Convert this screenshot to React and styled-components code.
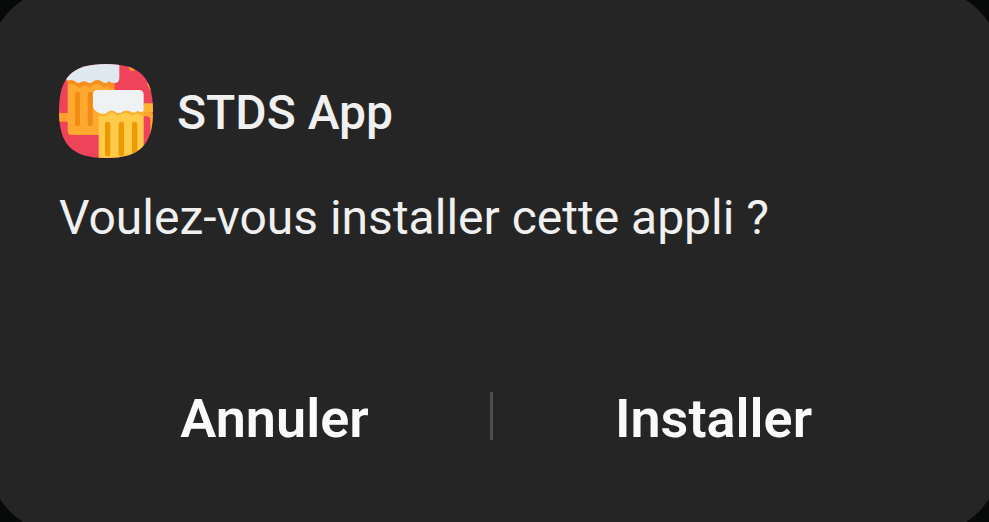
import React from 'react';
import styled, { createGlobalStyle } from 'styled-components';

const GlobalStyle = createGlobalStyle`
  * { box-sizing: border-box; }
  body { margin: 0; background: #070a09; }
`;

const Screen = styled.main`
  display: flex;
  min-height: 100vh;
  overflow: hidden;
  font-family: Roboto, 'Liberation Sans', sans-serif;
`;

const Dialog = styled.section`
  flex: 1;
  display: flex;
  flex-direction: column;
  margin: -12px;
  padding: 76px 72px 89px 71px;
  border-radius: 76px;
  background: #252525;
  color: #f0f0f0;
`;

const Header = styled.header`
  display: flex;
  align-items: center;
  gap: 24px;
`;

const AppIcon = styled.svg`
  flex: none;
  width: 94px;
  height: 94px;
`;

const Title = styled.h1`
  margin: 0;
  padding-top: 4px;
  font-size: 48px;
  line-height: 56px;
  font-weight: 500;
`;

const Message = styled.p`
  margin: 32px 0 0;
  font-size: 48px;
  line-height: 56px;
  font-weight: 400;
`;

const Actions = styled.footer`
  display: flex;
  align-items: center;
  margin-top: auto;
`;

const ActionButton = styled.button`
  flex: 1;
  padding: 6px 0 0;
  border: 0;
  background: transparent;
  color: #fafafa;
  font: inherit;
  font-size: 54px;
  line-height: 52px;
  font-weight: 600;
  cursor: pointer;
`;

const Divider = styled.span`
  width: 3px;
  height: 48px;
  margin-right: 5px;
  background: #4d4d4d;
`;

function BeerIcon() {
  return (
    <AppIcon viewBox="27 27 282 282" aria-hidden="true">
      <defs>
        <clipPath id="squircle">
          <path d="M168 27C270 27 309 66 309 168S270 309 168 309 27 270 27 168 66 27 168 27Z" />
        </clipPath>
      </defs>
      <g clipPath="url(#squircle)">
        <path fill="#ee4359" d="M27 27h282v282H27z" />
        <path fill="#ff9a2e" d="M234 35h14l8 12h-14zM290 84h12l7 22h-9z" />
        <path fill="#ffa02c" d="M27 174h30v26H27z" />
        <path fill="#ffa930" d="M53 70h140v170H65q-12 0-12-12z" />
        <path fill="#f78f1e" d="M53 72h140v28q-16 4-20-8-10 10-22-2-12-8-22 1-10 12-22 0-10 2-12 5-8 6-17-3-8-10-25-3z" />
        <rect x="75" y="110" width="15" height="104" rx="7" fill="#f18c12" />
        <rect x="113" y="110" width="15" height="104" rx="7" fill="#f18c12" />
        <path fill="#e0e9f0" d="M40 20h168v48q0 16-15 16-12 0-16-6-10 12-24 0-10-5-21-1-11 12-23 3-10-3-17 2-9 6-18-4-10-5-24-1z" />
        <path fill="#ffb233" d="M280 145h29v26h-29z" />
        <path fill="#fba62a" d="M280 171h20q9 0 9 9v70h-8v-54q0-12-12-12h-9z" />
        <path fill="#ffcb48" d="M146 165h135v144H146z" />
        <path fill="#f9b12d" d="M146 165h135v17q-12 0-20-7-12 11-23 1-13-7-23 2-13 9-23-4-14-3-21 5-11 8-25 2z" />
        <rect x="165" y="200" width="16" height="104" rx="8" fill="#ed9906" />
        <rect x="206" y="200" width="16" height="104" rx="8" fill="#ed9906" />
        <rect x="246" y="200" width="16" height="104" rx="8" fill="#ed9906" />
        <path fill="#eff2f3" d="M143 105h124q14 0 14 14v49q-8 6-18-1-11 10-24 2-13-6-23 2-13 9-23-3-14-4-22 5-10 6-21 2-20-6-21-22v-34q0-14 14-14z" />
      </g>
    </AppIcon>
  );
}

export default function App() {
  return (
    <>
      <GlobalStyle />
      <Screen>
        <Dialog role="dialog" aria-labelledby="install-title" aria-describedby="install-message">
          <Header>
            <BeerIcon />
            <Title id="install-title">STDS App</Title>
          </Header>
          <Message id="install-message">Voulez-vous installer cette appli ?</Message>
          <Actions>
            <ActionButton type="button">Annuler</ActionButton>
            <Divider />
            <ActionButton type="button">Installer</ActionButton>
          </Actions>
        </Dialog>
      </Screen>
    </>
  );
}
